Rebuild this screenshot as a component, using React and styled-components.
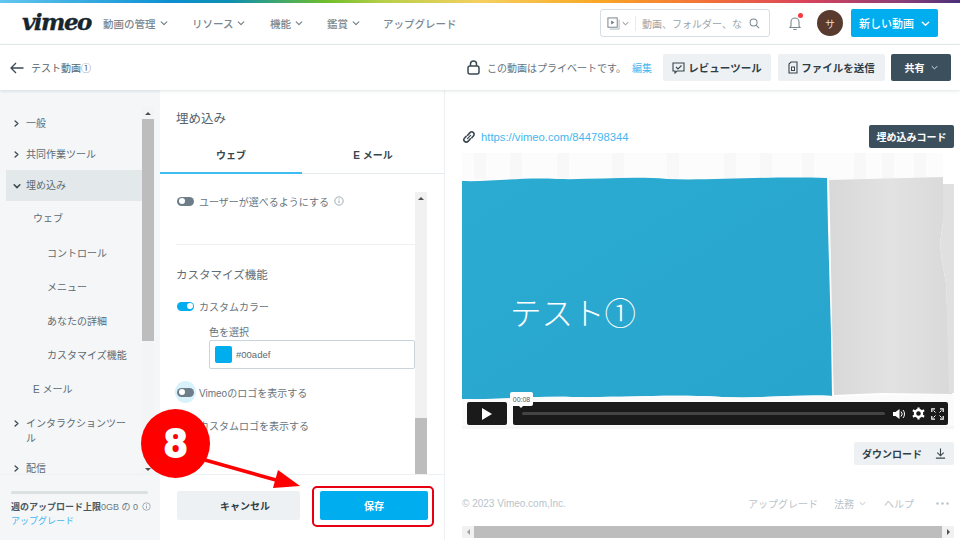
import React from "react";
import styled, { createGlobalStyle } from "styled-components";

const FONT = `"Liberation Sans", "Noto Sans CJK JP", sans-serif`;

const Global = createGlobalStyle`
  html, body { margin: 0; padding: 0; background: #fff; }
  body { font-family: ${FONT}; color: #4a5a64; }
  * { box-sizing: border-box; }
`;

const Page = styled.div`
  position: relative;
  width: 960px;
  height: 540px;
  overflow: hidden;
  display: flex;
  flex-direction: column;
  background: #fff;
`;

const Rainbow = styled.div`
  height: 3px;
  flex: none;
  background: linear-gradient(90deg, #62c6f0 0%, #0b8fd0 18%, #0f8fb0 24%, #6fbe2c 34%, #b9cf4a 40%, #f5d060 50%, #f9a825 62%, #f2703a 74%, #d9435c 84%, #8a3f78 94%, #4a2f7a 100%);
`;

const TopNav = styled.header`
  height: 42px;
  flex: none;
  display: flex;
  align-items: center;
  padding: 0 0 1px 22px;
  border-bottom: 1px solid #e6ecee;
`;

const Logo = styled.div`
  width: 81px;
  font-family: "DejaVu Serif", serif;
  font-style: italic;
  font-weight: 700;
  font-size: 23px;
  letter-spacing: -1.5px;
  color: #17262e;
  line-height: 1;
  margin-top: -3px;
  -webkit-text-stroke: 0.3px #17262e;
`;

const NavItem = styled.div`
  display: flex;
  align-items: center;
  gap: 4px;
  width: ${p => p.$w}px;
  flex: none;
  font-size: 10.5px;
  font-weight: 500;
  color: #7b878e;
  white-space: nowrap;
`;

const Chevron = ({ size = 8, color = "#6f7d85", width = 1.4 }) => (
  <svg width={size} height={size} viewBox="0 0 10 10" fill="none" style={{ flex: "none" }}>
    <path d="M1.5 3.5 5 7l3.5-3.5" stroke={color} strokeWidth={width} strokeLinecap="round" strokeLinejoin="round" />
  </svg>
);

const ChevronRight = ({ color = "#3f4d55" }) => (
  <svg width="7" height="7" viewBox="0 0 10 10" fill="none" style={{ flex: "none" }}>
    <path d="M3 1.5 7 5 3 8.5" stroke={color} strokeWidth="2" strokeLinecap="round" strokeLinejoin="round" />
  </svg>
);

const Spacer = styled.div`
  flex: 1;
`;

const Search = styled.div`
  width: 170px;
  height: 28px;
  border: 1px solid #d5dee3;
  border-radius: 3px;
  display: flex;
  align-items: center;
  padding: 0 9px 0 6px;
  font-size: 10px;
  color: #9aa5ab;
`;

const SearchKind = styled.div`
  display: flex;
  align-items: center;
  gap: 2px;
  padding-right: 6px;
  margin-right: 6px;
  border-right: 1px solid #e6ecee;
  height: 15px;
`;

const SearchText = styled.span`
  flex: 1;
  overflow: hidden;
  white-space: nowrap;
`;

const BellWrap = styled.div`
  position: relative;
  width: 14px;
  height: 16px;
  margin: 0 15px 0 18px;
`;

const BellDot = styled.span`
  position: absolute;
  top: -2px;
  right: -1px;
  width: 5px;
  height: 5px;
  border-radius: 50%;
  background: #f4393f;
`;

const Avatar = styled.div`
  width: 26px;
  height: 26px;
  border-radius: 50%;
  background: #593a2e;
  color: #e9dfda;
  font-size: 10px;
  display: flex;
  align-items: center;
  justify-content: center;
  margin-right: 8px;
`;

const NewButton = styled.div`
  width: 87px;
  height: 28px;
  background: #00adef;
  border-radius: 2px;
  color: #fff;
  font-size: 11px;
  font-weight: 500;
  display: flex;
  align-items: center;
  padding-left: 8px;
  gap: 7px;
  margin-right: 22px;
`;

const SubBar = styled.div`
  position: relative;
  z-index: 2;
  height: 45px;
  flex: none;
  display: flex;
  align-items: center;
  padding: 0 9px 0 10px;
  background: #fff;
  box-shadow: 0 1px 3px rgba(60, 80, 90, 0.16);
`;

const VideoTitle = styled.span`
  font-size: 10px;
  color: #55636b;
  margin-left: 7px;
`;

const PrivacyText = styled.span`
  font-size: 10px;
  color: #65737b;
  margin-left: 7px;
  white-space: nowrap;
`;

const EditLink = styled.span`
  font-size: 10px;
  color: #46b7ee;
  margin: 0 11px 0 6px;
`;

const ToolButton = styled.div`
  width: ${p => p.$w}px;
  height: 27px;
  border-radius: 2px;
  background: #eef1f3;
  color: #2f3e46;
  font-size: 10.5px;
  font-weight: 700;
  display: flex;
  align-items: center;
  justify-content: center;
  gap: 3px;
  margin-right: ${p => p.$mr}px;
`;

const ShareButton = styled.div`
  width: 60px;
  height: 27px;
  border-radius: 2px;
  background: #3c4f5d;
  color: #fff;
  font-size: 10px;
  font-weight: 700;
  display: flex;
  align-items: center;
  justify-content: center;
  gap: 6px;
`;

const Workspace = styled.div`
  flex: 1;
  min-height: 0;
  display: flex;
`;

const Sidebar = styled.aside`
  width: 160px;
  flex: none;
  background: #f4f6f8;
  display: flex;
  flex-direction: column;
`;

const SideScroll = styled.div`
  height: 385px;
  flex: none;
  padding: 18px 6px 0 6px;
  display: flex;
  overflow: hidden;
  border-bottom: 1px solid #eef1f3;
`;

const SideList = styled.nav`
  width: 136px;
  flex: none;
  display: flex;
  flex-direction: column;
`;

const SideRow = styled.div`
  height: ${p => p.$h || 31}px;
  flex: none;
  display: flex;
  align-items: ${p => (p.$top ? "flex-start" : "center")};
  gap: 5px;
  padding-left: ${p => p.$indent}px;
  padding-top: ${p => (p.$top ? 10 : 0)}px;
  padding-right: 10px;
  font-size: 10px;
  line-height: 15px;
  color: #5d6a72;
  background: ${p => (p.$active ? "#e3e9ea" : "transparent")};
`;

const SideCaret = styled.span`
  display: flex;
  align-items: center;
  height: 15px;
  width: 8px;
  flex: none;
`;

const ScrollTrack = styled.div`
  width: 12px;
  height: ${p => p.$h}px;
  margin-top: ${p => p.$mt || 0}px;
  flex: none;
  display: flex;
  flex-direction: column;
  align-items: stretch;
  background: ${p => p.$bg};
`;

const ScrollCap = styled.div`
  height: 12px;
  flex: none;
  display: flex;
  align-items: center;
  justify-content: center;
  margin-top: ${p => (p.$end ? "auto" : 0)};
`;

const ScrollThumb = styled.div`
  height: ${p => p.$h}px;
  margin-top: ${p => p.$top || 0}px;
  flex: none;
  background: #bdbdbd;
`;

const Triangle = styled.span`
  width: 0;
  height: 0;
  border-left: 3px solid transparent;
  border-right: 3px solid transparent;
  border-bottom: 3px solid #505050;
  ${p => p.$down && "transform: rotate(180deg);"}
`;

const SideFooter = styled.div`
  padding: 16px 11px 0;
  font-size: 9px;
`;

const QuotaBar = styled.div`
  width: 137px;
  height: 3px;
  background: #d9e1e3;
  border-radius: 2px;
  margin-bottom: 6px;
`;

const QuotaText = styled.div`
  display: flex;
  align-items: center;
  gap: 4px;
  color: #6b787f;
  white-space: nowrap;
  height: 13px;
`;

const QuotaStrong = styled.span`
  font-weight: 700;
  color: #4a575f;
`;

const SideLink = styled.div`
  color: #46b7ee;
  margin-top: 2px;
  line-height: 13px;
`;

const Panel = styled.section`
  width: 285px;
  flex: none;
  display: flex;
  flex-direction: column;
  border-right: 1px solid #eef1f3;
`;

const PanelTitle = styled.div`
  height: 56px;
  flex: none;
  padding: 21px 0 0 16px;
  font-size: 12.5px;
  line-height: 16px;
  color: #55636b;
`;

const Tabs = styled.div`
  height: 28px;
  flex: none;
  display: flex;
  border-bottom: 1px solid #e6ecee;
`;

const Tab = styled.div`
  flex: 1;
  display: flex;
  justify-content: center;
  padding-top: 1px;
  font-size: 10px;
  font-weight: 700;
  color: #38464e;
  height: 28px;
  border-bottom: 2px solid ${p => (p.$active ? "#3fbdf0" : "transparent")};
`;

const PanelBody = styled.div`
  height: 282px;
  flex: none;
  margin-top: 18px;
  padding-left: 16px;
  display: flex;
  overflow: hidden;
`;

const Form = styled.div`
  width: 239px;
  flex: none;
  display: flex;
  flex-direction: column;
`;

const ToggleRow = styled.div`
  display: flex;
  align-items: center;
  gap: 5px;
  height: 18px;
  padding-left: 1px;
  margin-top: ${p => p.$mt || 0}px;
  font-size: 10px;
  color: #67747c;
  white-space: nowrap;
`;

const Toggle = styled.span`
  position: relative;
  width: 17px;
  height: 9px;
  flex: none;
  border-radius: 5px;
  background: ${p => (p.$on ? "#00adef" : "#6e7e88")};
  &::after {
    content: "";
    position: absolute;
    top: 1.5px;
    left: ${p => (p.$on ? 10 : 1.5)}px;
    width: 6px;
    height: 6px;
    border-radius: 50%;
    background: #fff;
  }
`;

const FocusHalo = styled.span`
  width: 21px;
  height: 22px;
  flex: none;
  margin: 0 -2px;
  border-radius: 50%;
  background: #d9f1fb;
  display: flex;
  align-items: center;
  justify-content: center;
`;

const Divider = styled.hr`
  width: 100%;
  height: 1px;
  border: 0;
  background: #eef1f3;
  margin: 34px 0 0;
`;

const SectionTitle = styled.div`
  font-size: 11.5px;
  line-height: 16px;
  color: #5f6d75;
  margin-top: 22px;
`;

const FieldLabel = styled.div`
  font-size: 10px;
  line-height: 13px;
  color: #67747c;
  margin: 11px 0 1px 33px;
`;

const ColorField = styled.div`
  width: 206px;
  height: 29px;
  margin-left: 33px;
  border: 1px solid #c9d5da;
  border-radius: 2px;
  display: flex;
  align-items: center;
  gap: 4px;
  padding-left: 5px;
  font-size: 9.5px;
  color: #5d6a72;
`;

const Swatch = styled.span`
  width: 17px;
  height: 17px;
  border-radius: 2px;
  background: #00adef;
`;

const PanelFooter = styled.div`
  flex: 1;
  border-top: 1px solid #eef1f3;
  padding: 16px 0 0 17px;
  display: flex;
  gap: 20px;
`;

const CancelButton = styled.div`
  width: 123px;
  height: 29px;
  border-radius: 2px;
  background: #eef1f3;
  color: #2f3e46;
  font-size: 10px;
  font-weight: 700;
  padding-left: 13px;
  display: flex;
  align-items: center;
  justify-content: center;
`;

const SaveButton = styled.div`
  width: 108px;
  height: 29px;
  border-radius: 2px;
  background: #00adef;
  color: #fff;
  font-size: 10px;
  font-weight: 700;
  display: flex;
  align-items: center;
  justify-content: center;
`;

const Preview = styled.section`
  flex: 1;
  min-width: 0;
  padding: 35px 6px 0 17px;
  display: flex;
  flex-direction: column;
`;

const LinkRow = styled.div`
  height: 23px;
  flex: none;
  display: flex;
  align-items: center;
  gap: 5px;
`;

const UrlText = styled.span`
  font-size: 11.25px;
  color: #46b7ee;
  flex: 1;
`;

const EmbedButton = styled.div`
  width: 85px;
  height: 23px;
  border-radius: 2px;
  background: #3c4f5d;
  color: #fff;
  font-size: 10px;
  font-weight: 700;
  display: flex;
  align-items: center;
  justify-content: center;
  white-space: nowrap;
`;

const Player = styled.div`
  position: relative;
  width: 492px;
  height: 276px;
  margin-top: 5px;
  flex: none;
  overflow: hidden;
`;

const PlayerArt = styled.svg`
  display: block;
`;

const SlideTitle = styled.span`
  position: absolute;
  left: 48px;
  top: 136px;
  font-size: 31.5px;
  line-height: 44px;
  color: #fff;
  font-family: "Noto Sans CJK JP", sans-serif;
  font-weight: 300;
  white-space: nowrap;
`;

const Controls = styled.div`
  position: absolute;
  left: 5px;
  right: 6px;
  top: 249px;
  height: 23px;
  display: flex;
  gap: 6px;
`;

const PlayButton = styled.div`
  width: 40px;
  height: 23px;
  border-radius: 2px;
  background: #1a1a1a;
  display: flex;
  align-items: center;
  justify-content: center;
`;

const ControlBar = styled.div`
  flex: 1;
  height: 23px;
  border-radius: 2px;
  background: #1a1a1a;
  display: flex;
  align-items: center;
  padding: 0 4px 0 9px;
  gap: 6px;
`;

const Progress = styled.div`
  flex: 1;
  height: 3px;
  border-radius: 2px;
  background: #444;
  margin-right: 2px;
`;

const TimeTip = styled.div`
  position: absolute;
  left: 48px;
  top: 239px;
  width: 23px;
  height: 14px;
  border-radius: 2px;
  background: #fff;
  color: #555;
  font-size: 7px;
  display: flex;
  align-items: center;
  justify-content: center;
  &::after {
    content: "";
    position: absolute;
    left: 9px;
    bottom: -2px;
    border-left: 2px solid transparent;
    border-right: 2px solid transparent;
    border-top: 2px solid #fff;
  }
`;

const DownloadRow = styled.div`
  display: flex;
  justify-content: flex-end;
  margin-top: 13px;
  flex: none;
`;

const DownloadButton = styled.div`
  width: 100px;
  height: 23px;
  border-radius: 2px;
  background: #eef1f3;
  color: #2f3e46;
  font-size: 10px;
  font-weight: 700;
  display: flex;
  align-items: center;
  justify-content: space-between;
  padding: 0 8px 0 8px;
`;

const PageFooter = styled.footer`
  height: 16px;
  flex: none;
  margin-top: 30px;
  display: flex;
  align-items: center;
  justify-content: space-between;
  font-size: 10px;
  color: #b8c4ca;
`;

const FooterLinks = styled.div`
  display: flex;
  align-items: center;
  margin-right: 5px;
`;

const FooterLink = styled.span`
  display: flex;
  align-items: center;
  gap: ${p => p.$gap || 0}px;
  margin-left: ${p => p.$ml || 0}px;
`;

const HScroll = styled.div`
  height: 12px;
  flex: none;
  margin-top: 15px;
  display: flex;
  background: #f1f1f1;
`;

const HCap = styled.div`
  width: 12px;
  flex: none;
  display: flex;
  align-items: center;
  justify-content: center;
`;

const HThumb = styled.div`
  flex: 1;
  background: #bdbdbd;
`;

const SideTri = styled.span`
  width: 0;
  height: 0;
  border-top: 3px solid transparent;
  border-bottom: 3px solid transparent;
  ${p => (p.$right ? "border-left: 3px solid #505050;" : "border-right: 3px solid #a0a0a0;")}
`;

const Callout = styled.div`
  position: absolute;
  inset: 0;
  pointer-events: none;
  z-index: 5;
`;

const CalloutArt = styled.svg`
  position: absolute;
  inset: 0;
`;

const Badge = styled.div`
  position: absolute;
  left: 141px;
  top: 409px;
  width: 69px;
  height: 69px;
  border-radius: 50%;
  background: #fe0000;
  color: #fff;
  font-family: "Liberation Sans", sans-serif;
  font-weight: 700;
  font-size: 40px;
  display: flex;
  align-items: center;
  justify-content: center;
  -webkit-text-stroke: 2px #fff;
`;

const SaveFrame = styled.div`
  position: absolute;
  left: 312px;
  top: 486px;
  width: 122px;
  height: 41px;
  border: 2.5px solid #e60012;
  border-radius: 5px;
`;

const InfoIcon = ({ size = 10 }) => (
  <svg width={size} height={size} viewBox="0 0 12 12" fill="none" style={{ flex: "none" }}>
    <circle cx="6" cy="6" r="5" stroke="#8d9aa1" strokeWidth="1" />
    <path d="M6 5.4v3.2" stroke="#8d9aa1" strokeWidth="1.1" />
    <circle cx="6" cy="3.6" r=".7" fill="#8d9aa1" />
  </svg>
);

const sideItems = [
  { label: "一般", indent: 7, caret: "right" },
  { label: "共同作業ツール", indent: 7, caret: "right" },
  { label: "埋め込み", indent: 7, caret: "down", active: true },
  { label: "ウェブ", indent: 27, h: 35 },
  { label: "コントロール", indent: 41, h: 34 },
  { label: "メニュー", indent: 41, h: 34 },
  { label: "あなたの詳細", indent: 41, h: 34 },
  { label: "カスタマイズ機能", indent: 41, h: 34 },
  { label: "E メール", indent: 27, h: 34 },
  { label: "インタラクションツール", indent: 7, caret: "right", h: 45, top: true },
  { label: "配信", indent: 7, caret: "right", h: 34 },
];

const stripes = [12, 48, 95, 150, 205, 262, 298, 340, 392, 420, 452];

export default function App() {
  return (
    <Page>
      <Global />
      <Rainbow />
      <TopNav>
        <Logo>vimeo</Logo>
        <NavItem $w={89}>動画の管理<Chevron /></NavItem>
        <NavItem $w={78}>リソース<Chevron /></NavItem>
        <NavItem $w={57}>機能<Chevron /></NavItem>
        <NavItem $w={56}>鑑賞<Chevron /></NavItem>
        <NavItem $w={78}>アップグレード</NavItem>
        <Spacer />
        <Search>
          <SearchKind>
            <svg width="13" height="13" viewBox="0 0 14 14" fill="none">
              <rect x="1" y="1" width="10" height="10" stroke="#6f7d85" strokeWidth="1" />
              <path d="M3 13h10V3" stroke="#a8b3b9" strokeWidth="1" />
              <path d="M4.5 3.8v4.4L8 6z" fill="#6f7d85" />
            </svg>
            <Chevron size={7} />
          </SearchKind>
          <SearchText>動画、フォルダー、な</SearchText>
          <svg width="11" height="11" viewBox="0 0 12 12" fill="none">
            <circle cx="5" cy="5" r="3.8" stroke="#7b878e" strokeWidth="1.1" />
            <path d="M8 8l3 3" stroke="#7b878e" strokeWidth="1.2" />
          </svg>
        </Search>
        <BellWrap>
          <svg width="14" height="16" viewBox="0 0 14 16" fill="none">
            <path d="M3 11V7a4 4 0 0 1 8 0v4l1.2 1.5H1.8z" stroke="#7b878e" strokeWidth="1.1" strokeLinejoin="round" />
            <path d="M5.8 14.5h2.4" stroke="#7b878e" strokeWidth="1.2" strokeLinecap="round" />
          </svg>
          <BellDot />
        </BellWrap>
        <Avatar>サ</Avatar>
        <NewButton>新しい動画<Chevron size={9} color="#fff" width={1.6} /></NewButton>
      </TopNav>

      <SubBar>
        <svg width="14" height="12" viewBox="0 0 14 12" fill="none">
          <path d="M13.5 6H1M6 1 1 6l5 5" stroke="#3b4a52" strokeWidth="1.3" />
        </svg>
        <VideoTitle>テスト動画①</VideoTitle>
        <Spacer />
        <svg width="13" height="15" viewBox="0 0 13 15" fill="none">
          <rect x="1" y="6" width="11" height="8" rx="2" stroke="#3b4a52" strokeWidth="1.5" />
          <path d="M3.5 6V4a3 3 0 0 1 6 0v2" stroke="#3b4a52" strokeWidth="1.5" />
        </svg>
        <PrivacyText>この動画はプライベートです。</PrivacyText>
        <EditLink>編集</EditLink>
        <ToolButton $w={108} $mr={7}>
          <svg width="13" height="12" viewBox="0 0 13 12" fill="none">
            <path d="M1 1h11v8H5l-2 2V9H1z" stroke="#38464e" strokeWidth="1.1" />
            <path d="M4 5l2 2 3.5-3.5" stroke="#38464e" strokeWidth="1.1" />
          </svg>
          レビューツール
        </ToolButton>
        <ToolButton $w={107} $mr={6}>
          <svg width="10" height="13" viewBox="0 0 10 13" fill="none">
            <path d="M3 1h6v11H1V3z" stroke="#38464e" strokeWidth="1.1" />
            <rect x="3.5" y="6" width="3" height="3.5" stroke="#38464e" strokeWidth="1" />
          </svg>
          ファイルを送信
        </ToolButton>
        <ShareButton>共有<Chevron size={7} color="#dfe5e8" /></ShareButton>
      </SubBar>

      <Workspace>
        <Sidebar>
          <SideScroll>
            <SideList>
              {sideItems.map(it => (
                <SideRow key={it.label} $indent={it.indent} $h={it.h} $top={it.top} $active={it.active}>
                  {it.caret && (
                    <SideCaret>
                      {it.caret === "right" ? <ChevronRight /> : <Chevron size={8} color="#3f4d55" width={2} />}
                    </SideCaret>
                  )}
                  <span>{it.label}</span>
                </SideRow>
              ))}
            </SideList>
            <ScrollTrack $h={368} $mt={-1} $bg="#f2f4f6">
              <ScrollCap><Triangle /></ScrollCap>
              <ScrollThumb $h={222} />
              <ScrollCap $end><Triangle $down /></ScrollCap>
            </ScrollTrack>
          </SideScroll>
          <SideFooter>
            <QuotaBar />
            <QuotaText>
              <span><QuotaStrong>週のアップロード上限</QuotaStrong>0GB の 0</span>
              <InfoIcon size={9} />
            </QuotaText>
            <SideLink>アップグレード</SideLink>
          </SideFooter>
        </Sidebar>

        <Panel>
          <PanelTitle>埋め込み</PanelTitle>
          <Tabs>
            <Tab $active>ウェブ</Tab>
            <Tab>E メール</Tab>
          </Tabs>
          <PanelBody>
            <Form>
              <ToggleRow>
                <Toggle />
                ユーザーが選べるようにする
                <InfoIcon />
              </ToggleRow>
              <Divider />
              <SectionTitle>カスタマイズ機能</SectionTitle>
              <ToggleRow $mt={14}>
                <Toggle $on />
                カスタムカラー
              </ToggleRow>
              <FieldLabel>色を選択</FieldLabel>
              <ColorField><Swatch />#00adef</ColorField>
              <ToggleRow $mt={14}>
                <FocusHalo><Toggle /></FocusHalo>
                Vimeoのロゴを表示する
              </ToggleRow>
              <ToggleRow $mt={15}>
                <Toggle />
                カスタムロゴを表示する
              </ToggleRow>
            </Form>
            <ScrollTrack $h={282} $bg="#f1f1f1">
              <ScrollCap><Triangle /></ScrollCap>
              <ScrollThumb $top={214} $h={56} />
            </ScrollTrack>
          </PanelBody>
          <PanelFooter>
            <CancelButton>キャンセル</CancelButton>
            <SaveButton>保存</SaveButton>
          </PanelFooter>
        </Panel>

        <Preview>
          <LinkRow>
            <svg width="14" height="14" viewBox="0 0 14 14" fill="none">
              <path d="M5.6 5.2 8 2.6a2.4 2.4 0 0 1 3.4 3.4L9.8 7.7" stroke="#38464e" strokeWidth="1.6" strokeLinecap="round" />
              <path d="M8.4 8.8 6 11.4A2.4 2.4 0 0 1 2.6 8l1.6-1.7" stroke="#38464e" strokeWidth="1.6" strokeLinecap="round" />
              <path d="M5.4 8.6 8.6 5.4" stroke="#38464e" strokeWidth="1.2" strokeLinecap="round" />
            </svg>
            <UrlText>https://vimeo.com/844798344</UrlText>
            <EmbedButton>埋め込みコード</EmbedButton>
          </LinkRow>
          <Player>
            <PlayerArt width="492" height="276" viewBox="0 0 492 276">
              <defs>
                <linearGradient id="blueCloth" x1="0" y1="0" x2="1" y2="1">
                  <stop offset="0" stopColor="#2babd2" />
                  <stop offset="1" stopColor="#28a5cd" />
                </linearGradient>
                <linearGradient id="greyCloth" x1="0" y1="0" x2="1" y2="0">
                  <stop offset="0" stopColor="#d8d8d8" />
                  <stop offset=".5" stopColor="#e2e2e2" />
                  <stop offset="1" stopColor="#d9d9d9" />
                </linearGradient>
              </defs>
              <rect width="492" height="276" fill="#fff" />
              <rect width="481" height="30" fill="#fcfcfc" />
              {stripes.map(x => (
                <rect key={x} x={x} width="12" height="26" fill="#f1f1f1" opacity=".35" />
              ))}
              <path d="M367 27 L481 24 L481 69 L478 90 L480 109 L484 130 L486 180 L490 241 L420 240 L372 242 C370 190 369 90 367 27Z" fill="url(#greyCloth)" />
              <path d="M481 31 H492 V240 H487 L484 130 L480 109 L478 90 L481 69Z" fill="#e0e0e0" />
              <path d="M0 28 C30 29 60 24 95 26 C130 27 170 23 205 26 C245 28 300 23 365 25 L366 75 L369 180 L370 243 C330 241 300 246 260 244 C200 241 160 245 110 244 C70 243 30 247 0 246Z" fill="url(#blueCloth)" />
              <path d="M0 246 C40 247 70 243 110 244 C160 245 200 241 260 244 C300 246 330 241 372 243 L492 241 L492 276 L0 276Z" fill="#fbfbfb" />
              <rect x="0" y="273" width="492" height="3" fill="#f6f6f6" />
            </PlayerArt>
            <SlideTitle>テスト①</SlideTitle>
            <Controls>
              <PlayButton>
                <svg width="12" height="12" viewBox="0 0 12 12"><path d="M1 0l10 6-10 6z" fill="#fff" /></svg>
              </PlayButton>
              <ControlBar>
                <Progress />
                <svg width="13" height="12" viewBox="0 0 13 12" fill="none">
                  <path d="M0 4h2.5L6.5 1v10L2.5 8H0z" fill="#fff" />
                  <path d="M8 3.5a3.5 3.5 0 0 1 0 5M10 2a6 6 0 0 1 0 8" stroke="#fff" strokeWidth="1" />
                </svg>
                <svg width="13" height="13" viewBox="0 0 13 13">
                  <circle cx="6.5" cy="6.5" r="3.5" fill="none" stroke="#fff" strokeWidth="2.4" />
                  <path d="M6.5 .5v2.4M6.5 10v2.5M.9 3.3l2.1 1.2M10 8.5l2.1 1.2M.9 9.7 3 8.5M10 4.5l2.1-1.2" stroke="#fff" strokeWidth="2.2" />
                </svg>
                <svg width="13" height="12" viewBox="0 0 13 12" fill="none">
                  <path d="M9 .8h3.2V4M4 .8H.8V4M9 11.2h3.2V8M4 11.2H.8V8" stroke="#fff" strokeWidth="1.2" />
                  <path d="M8.5 4.5l2-2M4.500 4.500l-2-2M8.500 7.500l2 2M4.500 7.500l-2 2" stroke="#fff" strokeWidth="1" />
                </svg>
              </ControlBar>
            </Controls>
            <TimeTip>00:08</TimeTip>
          </Player>
          <DownloadRow>
            <DownloadButton>
              ダウンロード
              <svg width="11" height="11" viewBox="0 0 12 12" fill="none">
                <path d="M6 .5V8M2.5 5 6 8.500 9.500 5M1 11h10" stroke="#38464e" strokeWidth="1.2" />
              </svg>
            </DownloadButton>
          </DownloadRow>
          <PageFooter>
            <span>© 2023 Vimeo.com,Inc.</span>
            <FooterLinks>
              <FooterLink>アップグレード</FooterLink>
              <FooterLink $ml={16} $gap={5}>法務<Chevron size={7} color="#b8c4ca" /></FooterLink>
              <FooterLink $ml={18}>ヘルプ</FooterLink>
              <FooterLink $ml={22}>
                <svg width="13" height="3" viewBox="0 0 13 3"><circle cx="1.5" cy="1.5" r="1.2" fill="#b8c4ca" /><circle cx="6.5" cy="1.5" r="1.2" fill="#b8c4ca" /><circle cx="11.5" cy="1.5" r="1.2" fill="#b8c4ca" /></svg>
              </FooterLink>
            </FooterLinks>
          </PageFooter>
          <HScroll>
            <HCap><SideTri /></HCap>
            <HThumb />
            <HCap><SideTri $right /></HCap>
          </HScroll>
        </Preview>
      </Workspace>

      <Callout>
        <CalloutArt width="960" height="540" viewBox="0 0 960 540">
          <path d="M205 460 L283 482" stroke="#fe0000" strokeWidth="3.500" />
          <path d="M278 470 L300 486 L273 488Z" fill="#fe0000" />
        </CalloutArt>
        <Badge>8</Badge>
        <SaveFrame />
      </Callout>
    </Page>
  );
}
